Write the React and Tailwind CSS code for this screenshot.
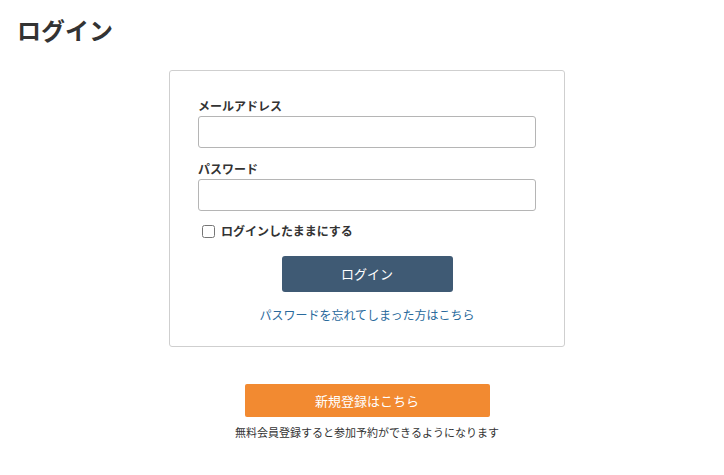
import React from "react";

const jp = { fontFamily: '"Noto Sans CJK JP", "Noto Sans", sans-serif' };

const Field = ({ label, type }) => (
  <div>
    <label className="block text-[12px] font-bold leading-[19px] text-[#333]">{label}</label>
    <input
      type={type}
      className="mt-[1px] block h-[32px] w-full rounded-[3px] border border-[#b5b5b5] bg-white px-2 text-sm outline-none"
    />
  </div>
);

export default function App() {
  return (
    <div className="min-h-[475px] bg-white text-[#333]" style={jp}>
      <h1 className="pl-[17px] pt-[12px] text-[24px] font-bold leading-[36px] text-[#333]">ログイン</h1>

      <div className="mt-[22px] flex flex-col items-center pl-[10px]">
        {/* Login card */}
        <div className="w-[396px] rounded-[3px] border border-[#cfcfcf] px-[28px] pb-[21px] pt-[25px]">
          <div className="flex flex-col gap-[11px]">
            <Field label="メールアドレス" type="email" />
            <Field label="パスワード" type="password" />
          </div>

          <label className="mt-[10px] flex items-center gap-[6px] pl-[4px] text-[12px] font-bold leading-[20px]">
            <input type="checkbox" className="h-[13px] w-[13px] rounded-[2px] border border-[#888] accent-[#3e5a73]" />
            <span>ログインしたままにする</span>
          </label>

          <div className="mt-[15px] flex justify-center">
            <button className="h-[36px] w-[171px] rounded-[3px] bg-[#3f5a74] text-[13px] text-white">
              ログイン
            </button>
          </div>

          <div className="mt-[13px] text-center text-[12px] leading-[20px]">
            <a href="#" className="text-[#2a6a9c]">パスワードを忘れてしまった方はこちら</a>
          </div>
        </div>

        {/* Register */}
        <button className="mt-[37px] h-[33px] w-[245px] rounded-[2px] bg-[#f28a31] text-[13px] text-white">
          新規登録はこちら
        </button>
        <p className="mt-[6px] text-[11px] leading-[18px] text-[#333]">
          無料会員登録すると参加予約ができるようになります
        </p>
      </div>
    </div>
  );
}
